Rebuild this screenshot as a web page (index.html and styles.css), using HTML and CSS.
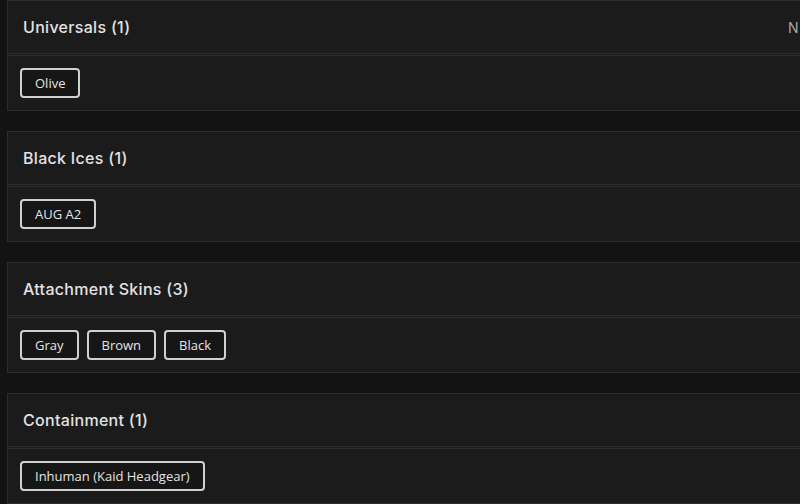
FILE: index.html
```html
<!DOCTYPE html>
<html>
<head>
<meta charset="utf-8">
<link rel="stylesheet" href="styles.css">
</head>
<body>
<div class="page">
  <section class="card first">
    <div class="card-head">
      <h2 class="title">Universals (1)</h2>
      <span class="aside">N</span>
    </div>
    <div class="card-body">
      <span class="chip">Olive</span>
    </div>
  </section>
  <section class="card">
    <div class="card-head">
      <h2 class="title">Black Ices (1)</h2>
    </div>
    <div class="card-body">
      <span class="chip">AUG A2</span>
    </div>
  </section>
  <section class="card">
    <div class="card-head">
      <h2 class="title">Attachment Skins (3)</h2>
    </div>
    <div class="card-body">
      <span class="chip">Gray</span>
      <span class="chip">Brown</span>
      <span class="chip">Black</span>
    </div>
  </section>
  <section class="card">
    <div class="card-head">
      <h2 class="title">Containment (1)</h2>
    </div>
    <div class="card-body">
      <span class="chip">Inhuman (Kaid Headgear)</span>
    </div>
  </section>
</div>
</body>
</html>
```
FILE: styles.css
```css
html, body {
  margin: 0;
  padding: 0;
  background: #131313;
  overflow: hidden;
  height: 504px;
}
.page {
  width: 800px;
  overflow: hidden;
  padding: 0 0 0 7px;
  box-sizing: border-box;
  display: flex;
  flex-direction: column;
  gap: 20px;
  font-family: "Inter", "Open Sans", "Liberation Sans", sans-serif;
}
.card {
  width: 820px;
  flex: none;
  background: #1b1b1b;
  border: 1px solid #2c2c2c;
  box-sizing: border-box;
}
.card-head {
  height: 52px;
  display: flex;
  align-items: center;
  justify-content: space-between;
  padding: 0 0 0 15px;
  border-bottom: 3px double #2c2c2c;
}
.title {
  margin: 0;
  font-size: 16px;
  font-weight: 500;
  color: #e2e2e2;
  letter-spacing: 0.3px;
}
.aside {
  color: #a8a8a8;
  font-size: 14px;
  width: 38px;
}
.card-body {
  display: flex;
  gap: 8px;
  padding: 12px;
}
.chip {
  height: 30px;
  box-sizing: border-box;
  display: inline-flex;
  align-items: center;
  padding: 0 13px;
  border: 2px solid #d0d0d0;
  border-radius: 4px;
  background: #161616;
  color: #e4e4e4;
  font-family: "Open Sans", "Liberation Sans", sans-serif;
  font-size: 13px;
}
```
